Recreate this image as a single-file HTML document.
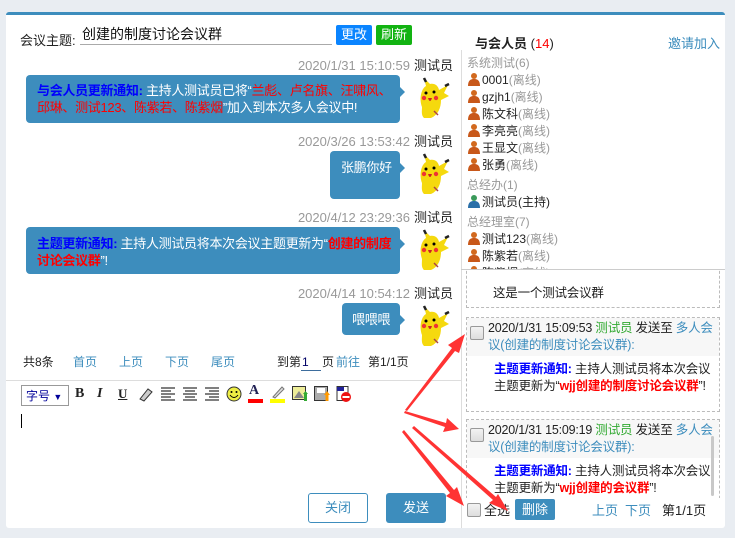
<!DOCTYPE html>
<html><head><meta charset="utf-8">
<style>
*{margin:0;padding:0;box-sizing:border-box}
body{width:735px;height:538px;background:#e9edf2;font-family:"Liberation Sans","Noto Sans CJK SC",sans-serif;font-size:13px;color:#222;position:relative;overflow:hidden}
.a{position:absolute;white-space:nowrap;line-height:16px}
.card{position:absolute;left:6px;top:12px;width:719px;height:516px;background:#fff;border-top:3px solid #3d8dbd;border-radius:3px}
.ts{color:#999;font-size:13px}
.bub{position:absolute;background:#3d8dbd;border-radius:4px;color:#fff;font-size:13px;line-height:17px;white-space:nowrap;letter-spacing:-0.3px}
.bub:after{content:"";position:absolute;right:-5px;top:12px;border-left:5px solid #3d8dbd;border-top:5px solid transparent;border-bottom:5px solid transparent}
.b{color:#00f;font-weight:bold}
.r{color:#f00}
.lk{color:#3d8dbd}
.u{position:absolute;left:468px;font-size:12px;white-space:nowrap;line-height:17px}
.u .g{color:#999}
.ic{display:inline-block;width:14px;height:14px;vertical-align:-2px;margin-right:1px}
.box{position:absolute;left:466px;width:254px;border:1px dashed #bbb;white-space:normal;font-size:12.5px;letter-spacing:-0.2px}
.hd{background:#f7f7f7;padding:2px 0 2px 21px;line-height:17px;position:relative}
.cb{position:absolute;width:14px;height:14px;border:1px solid #999;border-radius:2px;background:linear-gradient(#f3f3f3,#ddd)}
.pg{font-size:12px}
</style></head><body>
<div class="card"></div>
<div class="a" style="left:20px;top:33px;font-size:13px">会议主题:</div>
<div class="a" style="left:80px;top:25px;width:252px;height:20px;border-bottom:1px solid #aaa;font-size:14px;color:#111;padding-left:2px;line-height:18px">创建的制度讨论会议群</div>
<div class="a" style="left:336px;top:25px;width:36px;height:20px;background:#0a84ff;color:#fff;text-align:center;line-height:20px;border-radius:2px">更改</div>
<div class="a" style="left:376px;top:25px;width:36px;height:20px;background:#12b312;color:#fff;text-align:center;line-height:20px;border-radius:2px">刷新</div>

<svg width="0" height="0" style="position:absolute"><defs>
<g id="pk"><path d="M8 30 C5 22 7 12 12 9 L10 1 L16 7 C20 6 24 8 25 13 L34 8 L30 16 L35 19 L27 23 C27 31 24 38 17 41 L10 41 C7 38 8 34 8 30Z" fill="#f5d90e"/><path d="M10 1 L12 5" stroke="#222" stroke-width="2.5"/><path d="M31 9 L35 7" stroke="#222" stroke-width="2.5"/><circle cx="12" cy="16" r="1.5" fill="#000"/><circle cx="20" cy="15" r="1.5" fill="#000"/><circle cx="10" cy="21" r="2.2" fill="#e33"/><circle cx="22" cy="21" r="2.2" fill="#e33"/><path d="M14 21 Q16 27 18 21Z" fill="#c22"/><path d="M20 34 L24 38" stroke="#a44" stroke-width="1.5"/></g>
<g id="man"><circle cx="7" cy="4" r="3" fill="#d2691e"/><path d="M1 14 C1 8 4 7 7 7 C10 7 13 8 13 14Z" fill="#c8581a"/></g>
<g id="man2"><circle cx="7" cy="4" r="3" fill="#3a9a5a"/><path d="M1 14 C1 8 4 7 7 7 C10 7 13 8 13 14Z" fill="#2a6fa8"/></g>
</defs></svg>

<div class="a ts" style="right:325px;top:58px">2020/1/31 15:10:59</div>
<div class="a" style="left:414px;top:58px">测试员</div>
<div class="bub" style="left:26px;top:75px;width:374px;height:48px;padding:7px 8px 0 11px"><span class="b">与会人员更新通知:</span> 主持人测试员已将“<span class="r">兰彪、卢名旗、汪啸风、</span><br><span class="r">邱琳、测试123、陈紫若、陈紫烟</span>”加入到本次多人会议中!</div>
<svg class="a" style="left:414px;top:77px" width="36" height="42"><use href="#pk"/></svg>

<div class="a ts" style="right:325px;top:134px">2020/3/26 13:53:42</div>
<div class="a" style="left:414px;top:134px">测试员</div>
<div class="bub" style="left:330px;top:151px;width:70px;height:48px;padding:8px 0 0 11px">张鹏你好</div>
<svg class="a" style="left:414px;top:153px" width="36" height="42"><use href="#pk"/></svg>

<div class="a ts" style="right:325px;top:210px">2020/4/12 23:29:36</div>
<div class="a" style="left:414px;top:210px">测试员</div>
<div class="bub" style="left:26px;top:227px;width:374px;height:47px;padding:8px 8px 0 11px"><span class="b">主题更新通知:</span> 主持人测试员将本次会议主题更新为“<span class="r" style="font-weight:bold">创建的制度</span><br><span class="r" style="font-weight:bold">讨论会议群</span>”!</div>
<svg class="a" style="left:414px;top:229px" width="36" height="42"><use href="#pk"/></svg>

<div class="a ts" style="right:325px;top:286px">2020/4/14 10:54:12</div>
<div class="a" style="left:414px;top:286px">测试员</div>
<div class="bub" style="left:342px;top:303px;width:58px;height:32px;padding:8px 0 0 10px">喂喂喂</div>
<svg class="a" style="left:414px;top:305px" width="36" height="42"><use href="#pk"/></svg>

<div class="a pg" style="left:23px;top:354px">共8条</div>
<div class="a pg lk" style="left:73px;top:354px">首页</div>
<div class="a pg lk" style="left:119px;top:354px">上页</div>
<div class="a pg lk" style="left:165px;top:354px">下页</div>
<div class="a pg lk" style="left:211px;top:354px">尾页</div>
<div class="a pg" style="left:277px;top:354px">到第</div>
<div class="a pg" style="left:301px;top:354px;width:20px;height:17px;border-bottom:1px solid #3d6d9d;color:#006;padding-left:1px">1</div>
<div class="a pg" style="left:322px;top:354px">页</div>
<div class="a pg lk" style="left:336px;top:354px">前往</div>
<div class="a pg" style="left:368px;top:354px">第1/1页</div>
<div class="a" style="left:6px;top:380px;width:455px;height:1px;background:#ddd"></div>

<div class="a" style="left:21px;top:385px;width:48px;height:21px;border:1px solid #999;color:#009;font-size:12px;padding:2px 0 0 4px">字号 <span style="font-size:9px">▼</span></div>
<div class="a" style="left:75px;top:386px;font-family:'Liberation Serif',serif;font-weight:bold;font-size:14px">B</div>
<div class="a" style="left:97px;top:386px;font-family:'Liberation Serif',serif;font-style:italic;font-weight:bold;font-size:14px">I</div>
<div class="a" style="left:118px;top:386px;font-family:'Liberation Serif',serif;font-weight:bold;font-size:13px;text-decoration:underline">U</div>
<svg class="a" style="left:137px;top:386px" width="16" height="16"><path d="M3 13 L11 3 L15 6 L7 15Z" fill="#ccc" stroke="#333"/></svg>
<svg class="a" style="left:160px;top:387px" width="100" height="14" stroke="#000" stroke-width="1"><path d="M1 1h14M1 4h10M1 7h14M1 10h10M1 13h14"/><path d="M23 1h14M25 4h10M23 7h14M25 10h10M23 13h14"/><path d="M45 1h14M49 4h10M45 7h14M49 10h10M45 13h14"/></svg>
<svg class="a" style="left:226px;top:386px" width="16" height="16"><circle cx="8" cy="8" r="7" fill="#ee4" stroke="#333"/><circle cx="5.5" cy="6" r="1" fill="#000"/><circle cx="10.5" cy="6" r="1" fill="#000"/><path d="M4 9 Q8 14 12 9" stroke="#000" fill="none"/></svg>
<div class="a" style="left:249px;top:383px;font-family:'Liberation Serif',serif;font-weight:bold;color:#225;font-size:14px">A</div>
<div class="a" style="left:248px;top:399px;width:15px;height:4px;background:#f00"></div>
<svg class="a" style="left:270px;top:385px" width="16" height="14"><path d="M3 12 L12 2 L14 4 L5 13Z" fill="#ddd" stroke="#777"/></svg>
<div class="a" style="left:270px;top:399px;width:15px;height:4px;background:#ff0"></div>
<svg class="a" style="left:292px;top:386px" width="16" height="16"><rect x="0.5" y="0.5" width="13" height="13" fill="#ee9" stroke="#333"/><path d="M2 12 L7 5 L12 12Z" fill="#888"/><path d="M11 8 L16 8 L13.5 5Z M12 8h3v7h-3Z" fill="#3a3"/></svg>
<svg class="a" style="left:314px;top:386px" width="16" height="16"><rect x="0.5" y="0.5" width="13" height="14" fill="#aaa" stroke="#333"/><rect x="3" y="2" width="8" height="5" fill="#fff"/><path d="M10 9 L16 9 L13 5Z M11.5 9h3v6h-3Z" fill="#f90"/></svg>
<svg class="a" style="left:336px;top:386px" width="16" height="17"><rect x="1" y="0.5" width="11" height="14" fill="#fff" stroke="#333"/><rect x="1" y="1" width="7" height="4" fill="#229"/><circle cx="10" cy="11" r="5" fill="#e11"/><rect x="6.5" y="10" width="7" height="2" fill="#fff"/></svg>
<div class="a" style="left:21px;top:414px;width:1px;height:14px;background:#000"></div>

<div class="a" style="left:308px;top:493px;width:60px;height:30px;border:1px solid #3d8dbd;border-radius:3px;color:#3d8dbd;text-align:center;line-height:28px">关闭</div>
<div class="a" style="left:386px;top:493px;width:60px;height:30px;background:#3d8dbd;border-radius:3px;color:#fff;text-align:center;line-height:30px">发送</div>

<div class="a" style="left:461px;top:50px;width:1px;height:478px;background:#ddd"></div>
<div class="a" style="left:475px;top:36px;font-weight:bold">与会人员 <span style="font-weight:normal">(</span><span class="r" style="font-weight:normal">14</span><span style="font-weight:normal">)</span></div>
<div class="a lk" style="left:668px;top:36px">邀请加入</div>
<div class="a" style="left:462px;top:54px;width:263px;height:215px;overflow:hidden">
<div class="u" style="left:5px;top:1px"><span class="g">系统测试(6)</span></div>
<div class="u" style="left:5px;top:18px"><svg class="ic"><use href="#man"/></svg>0001<span class="g">(离线)</span></div>
<div class="u" style="left:5px;top:35px"><svg class="ic"><use href="#man"/></svg>gzjh1<span class="g">(离线)</span></div>
<div class="u" style="left:5px;top:52px"><svg class="ic"><use href="#man"/></svg>陈文科<span class="g">(离线)</span></div>
<div class="u" style="left:5px;top:69px"><svg class="ic"><use href="#man"/></svg>李亮亮<span class="g">(离线)</span></div>
<div class="u" style="left:5px;top:86px"><svg class="ic"><use href="#man"/></svg>王显文<span class="g">(离线)</span></div>
<div class="u" style="left:5px;top:103px"><svg class="ic"><use href="#man"/></svg>张勇<span class="g">(离线)</span></div>
<div class="u" style="left:5px;top:123px"><span class="g">总经办(1)</span></div>
<div class="u" style="left:5px;top:140px"><svg class="ic"><use href="#man2"/></svg>测试员(主持)</div>
<div class="u" style="left:5px;top:160px"><span class="g">总经理室(7)</span></div>
<div class="u" style="left:5px;top:177px"><svg class="ic"><use href="#man"/></svg>测试123<span class="g">(离线)</span></div>
<div class="u" style="left:5px;top:194px"><svg class="ic"><use href="#man"/></svg>陈紫若<span class="g">(离线)</span></div>
<div class="u" style="left:5px;top:211px"><svg class="ic"><use href="#man"/></svg>陈紫烟<span class="g">(离线)</span></div>
</div>
<div class="a" style="left:461px;top:269px;width:264px;height:1px;background:#ccc"></div>

<div class="a" style="left:466px;top:270px;width:254px;height:228px;overflow:hidden;white-space:normal">
 <div class="box" style="left:0;top:-4px;height:42px;border-top:none"><div style="padding:19px 0 0 26px">这是一个测试会议群</div></div>
 <div class="box" style="left:0;top:47px;height:95px">
  <div class="hd"><div class="cb" style="left:3px;top:8px"></div>2020/1/31 15:09:53 <span style="color:#3a3">测试员</span> 发送至 <span class="lk">多人会议(创建的制度讨论会议群):</span></div>
  <div style="padding:5px 2px 0 27px;line-height:17px"><span class="b">主题更新通知:</span> 主持人测试员将本次会议主题更新为“<span class="r" style="font-weight:bold">wjj创建的制度讨论会议群</span>”!</div>
 </div>
 <div class="box" style="left:0;top:149px;height:90px">
  <div class="hd"><div class="cb" style="left:3px;top:8px"></div>2020/1/31 15:09:19 <span style="color:#3a3">测试员</span> 发送至 <span class="lk">多人会议(创建的制度讨论会议群):</span></div>
  <div style="padding:5px 2px 0 27px;line-height:17px"><span class="b">主题更新通知:</span> 主持人测试员将本次会议主题更新为“<span class="r" style="font-weight:bold">wjj创建的会议群</span>”!</div>
 </div>
 <div class="a" style="left:245px;top:166px;width:3px;height:60px;background:#c8c8c8;border-radius:2px"></div>
</div>

<div class="cb" style="left:467px;top:503px"></div>
<div class="a" style="left:484px;top:503px">全选</div>
<div class="a" style="left:515px;top:499px;width:40px;height:21px;background:#3d8dbd;color:#fff;text-align:center;line-height:21px;border-radius:2px">删除</div>
<div class="a lk" style="left:592px;top:503px">上页</div>
<div class="a lk" style="left:625px;top:503px">下页</div>
<div class="a" style="left:662px;top:503px">第1/1页</div>

<svg class="a" style="left:0;top:0" width="735" height="538">
<g fill="#f33">
<path d="M405 410 L452 348 L448 345 L465 334 L459 353 L455 351 L407 411Z"/>
<path d="M405 411 L446 423 L447 418 L459 429 L443 432 L445 427 L404 413Z"/>
<path d="M402 432 L450 493 L446 496 L464 506 L457 487 L454 490 L404 430Z"/>
<path d="M412 428 L493 500 L489 503 L508 511 L498 494 L496 497 L414 426Z"/>
</g>
</svg>
</body></html>
